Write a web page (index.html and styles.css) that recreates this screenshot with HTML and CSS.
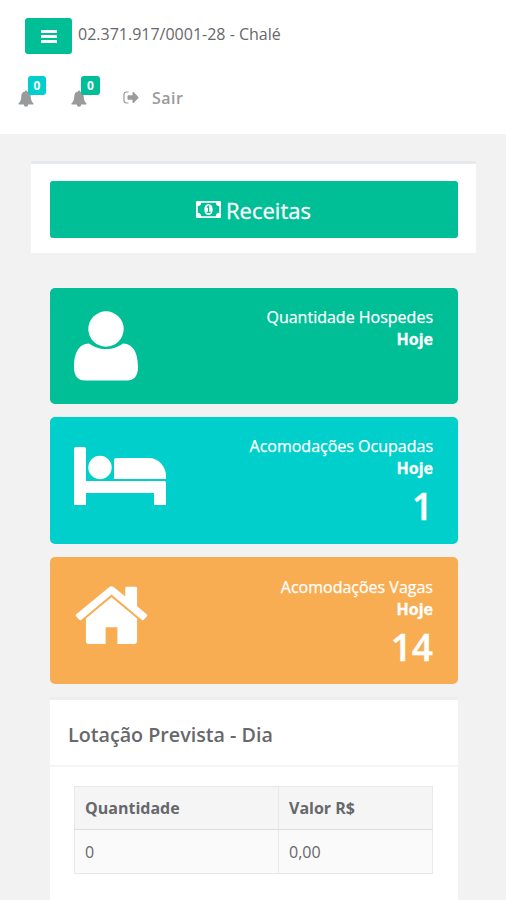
FILE: index.html
```html
<!DOCTYPE html>
<html lang="pt-BR">
<head>
<meta charset="utf-8">
<title>Chalé</title>
<link rel="stylesheet" href="styles.css">
</head>
<body>
<header class="topbar">
  <div class="brand">
    <button class="menu" aria-label="Menu"><svg width="16" height="14" viewBox="0 0 16 14" fill="#fff"><rect width="16" height="3" y="1" rx=".5"/><rect width="16" height="3" y="6" rx=".5"/><rect width="16" height="3" y="11" rx=".5"/></svg></button>
    <span class="company">02.371.917/0001-28 - Chalé</span>
  </div>
  <nav class="links">
    <a class="bell"><svg width="16" height="17" viewBox="0 0 16 17"><path d="M8 .4c.7 0 1 .5 1 1.100 2.300.5 3.700 2.200 3.700 4.500 0 4 1 5.800 2.900 7.400 0 .8-.4 1.200-1.200 1.200H10.200a2.200 2.200 0 0 1-4.400 0H1.600c-.8 0-1.200-.4-1.200-1.200C2.300 11.800 3.300 10 3.300 6 3.300 3.700 4.700 2 7 1.500 7 .9 7.300.4 8 .4z"/></svg><span class="badge cyan">0</span></a>
    <a class="bell"><svg width="16" height="17" viewBox="0 0 16 17"><path d="M8 .4c.7 0 1 .5 1 1.100 2.300.5 3.700 2.200 3.700 4.500 0 4 1 5.800 2.900 7.400 0 .8-.4 1.200-1.200 1.200H10.200a2.200 2.200 0 0 1-4.400 0H1.600c-.8 0-1.200-.4-1.200-1.200C2.300 11.800 3.300 10 3.300 6 3.300 3.700 4.700 2 7 1.500 7 .9 7.300.4 8 .4z"/></svg><span class="badge green">0</span></a>
    <a class="exit"><svg width="16" height="13" viewBox="0 0 16 13"><path d="M5.500 1H3.400Q1 1 1 3.400v6.200Q1 12 3.400 12h2.100" fill="none" stroke="#999a9c" stroke-width="1.200"/><path d="M9.500 1.300v2.900H5.200q-.7 0-.7.700v3.200q0 .7.700.7h4.300v2.900q.4.700 1.100.2l4.800-4.900q.5-.5 0-1L10.600 1.100q-.7-.5-1.100.2z"/></svg><span>Sair</span></a>
  </nav>
</header>
<main>
  <section class="action">
    <button class="receitas"><svg width="25" height="17" viewBox="0 0 25 17"><path fill="#fff" fill-rule="evenodd" d="M1 0h23q1 0 1 1v15q0 1-1 1H1q-1 0-1-1V1q0-1 1-1zM5.200 1.800Q5 5 1.800 5.200v6.600Q5 12 5.200 15.200h14.600q.2-3.200 3.400-3.400V5.200Q20 5 19.800 1.800z"/><ellipse cx="12.500" cy="8.500" rx="4.200" ry="5.500" fill="#fff"/><path d="M11 6.400 12.600 5.200v6M10.700 11.400h3.800" fill="none" stroke="#00be96" stroke-width="1.300"/></svg><span>Receitas</span></button>
  </section>
  <section class="stat s1">
    <svg width="64" height="70" viewBox="0 0 64 70"><circle cx="32" cy="18" r="17.700"/><path d="M15 32.500C4 33 0 43 0 56c0 9 4 13.500 11 13.500h42c7 0 11-4.500 11-13.500 0-13-4-23-15-23.500-5 3.500-10 5.500-17 5.500s-12-2-17-5.500z"/></svg>
    <div class="info"><p>Quantidade Hospedes</p><b>Hoje</b></div>
  </section>
  <section class="stat s2">
    <svg width="92" height="58" viewBox="0 0 92 58"><path d="M2 0h8q2 0 2 2v32h78q2 0 2 2v22H80V46H12v12H0V2q0-2 2-2z"/><circle cx="26" cy="20.500" r="11.700"/><path d="M42 11h33c9 0 17 8 17 18v3H40V13q0-2 2-2z"/></svg>
    <div class="info"><p>Acomodações Ocupadas</p><b>Hoje</b><strong>1</strong></div>
  </section>
  <section class="stat s3">
    <svg width="73" height="59" viewBox="0 0 74 60"><path d="M37 11.500 63 33v23.500q0 2.500-2.500 2.500H43V42H31v17H13.500Q11 59 11 56.500V33z"/><path d="M34.500 1.200q2.500-2 5 0L51 10.800V2q0-1.200 1.200-1.200h9.600Q63 .8 63 2v18.600l9.800 8.200q1 .9.200 1.900l-3.200 3.700q-.9.900-1.900.1L37 8.700 6.100 34.500q-1 .8-1.900-.1L1 30.700q-.8-1 .2-1.900z"/></svg>
    <div class="info"><p>Acomodações Vagas</p><b>Hoje</b><strong>14</strong></div>
  </section>
  <section class="panel">
    <h2>Lotação Prevista - Dia</h2>
    <div class="panel-body">
      <table>
        <thead><tr><th>Quantidade</th><th>Valor R$</th></tr></thead>
        <tbody><tr><td>0</td><td>0,00</td></tr></tbody>
      </table>
    </div>
  </section>
</main>
</body>
</html>
```
FILE: styles.css
```css
* { box-sizing: border-box; }
body { margin: 0; height: 900px; overflow: hidden; background: #f2f2f2; color: #66686b; font: 16px/22px "Open Sans", sans-serif; }
svg { display: block; flex: none; }
button { border: 0; padding: 0; color: #fff; font: inherit; background: #00be96; display: flex; align-items: center; justify-content: center; }
.topbar { height: 134px; background: #fff; padding: 18px 0 0 25px; }
.brand { display: flex; height: 36px; }
.menu { width: 47px; height: 36px; border-radius: 3px; }
.company { margin: 5px 0 0 6px; white-space: nowrap; }
.links { display: flex; margin: 22px 0 0 -7px; height: 32px; color: #999a9c; fill: #999a9c; font-weight: 600; }
.bell { position: relative; width: 53px; padding-top: 14px; }
.badge { position: absolute; left: 10px; top: 0; width: 18px; height: 19px; border-radius: 3px; color: #fff; font-size: 12px; font-weight: 700; line-height: 20px; text-align: center; }
.cyan { background: #00cfcb; }
.green { background: #00be96; width: 19px; }
.exit { display: flex; align-items: center; gap: 13px; padding-top: 10px; height: 33px; margin-left: -1px; letter-spacing: .5px; }
main { padding: 27px 31px 0; }
.action { height: 92px; width: 445px; background: #fff; border-top: 3px solid #e7eaec; padding: 17px 18px 0 19px; margin-bottom: 35px; }
.receitas { width: 100%; height: 57px; border-radius: 3px; gap: 5px; font-size: 22px; padding-right: 1px; -webkit-text-stroke: .3px #fff; }
.stat { margin: 0 18px 13px 19px; width: 408px; height: 127px; padding: 19px 25px 0 24px; border-radius: 5px; display: flex; justify-content: space-between; color: #fff; fill: #fff; }
.s1 { background: #00be96; height: 116px; }
.s2 { background: #00cfcb; }
.s3 { background: #f9ad52; }
.s1 svg { margin-top: 4px; }
.s2 svg { margin-top: 11px; }
.s3 svg { margin: 10px 0 0 1px; }
.info { text-align: right; margin-top: -1px; }
.s3 .info { margin-top: 0; }
.info p { margin: 0; white-space: nowrap; -webkit-text-stroke: .25px #fff; }
.info b, .info strong { display: block; }
.info b { -webkit-text-stroke: .3px #fff; }
.info strong { font-size: 37px; line-height: 44px; margin-top: 5px; font-weight: 600; -webkit-text-stroke: .4px #fff; }
.panel { margin: 0 0 0 19px; width: 408px; height: 220px; background: #fff; border-top: 3px solid #eceef0; }
h2 { margin: 0; height: 67px; padding: 23px 18px 0; border-bottom: 2px solid #f5f5f5; font-size: 19.7px; line-height: 24px; font-weight: 600; }
.panel-body { padding: 19px 24px; }
table { width: 359px; border-collapse: collapse; table-layout: fixed; }
th, td { border: 1px solid #e8e8e8; padding: 0 10px; height: 43px; text-align: left; font-weight: 400; background: #fafafa; }
th { font-weight: 700; background: #f5f5f6; border-bottom-color: #ddd; }
th:first-child { width: 204px; }
td { height: 44px; }
```
